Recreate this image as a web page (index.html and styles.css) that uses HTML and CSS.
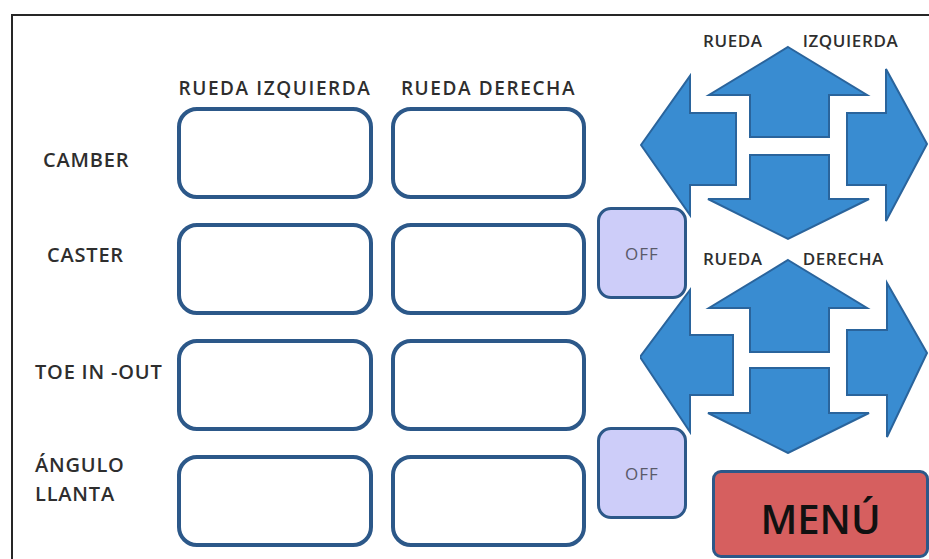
FILE: index.html
```html
<!DOCTYPE html>
<html>
  <head>
    <meta charset="utf-8">
    <link rel="stylesheet" href="styles.css">
  </head>
  <body>
    <div class="panel">
      <div class="table">
        <div class="col-head col-head--first">RUEDA IZQUIERDA</div>
        <div class="col-head">RUEDA DERECHA</div>

        <div class="label label--camber">CAMBER</div>
        <div class="field"></div>
        <div class="field"></div>

        <div class="label label--caster">CASTER</div>
        <div class="field"></div>
        <div class="field"></div>
        <div class="toggle toggle--top">OFF</div>

        <div class="label label--toe">TOE IN -OUT</div>
        <div class="field"></div>
        <div class="field"></div>

        <div class="label label--angle">ÁNGULO<br>LLANTA</div>
        <div class="field"></div>
        <div class="field"></div>
        <div class="toggle toggle--bottom">OFF</div>
      </div>

      <div class="side">
        <div class="wheel wheel--left">
          <div class="wheel-caption"><span>RUEDA</span><span>IZQUIERDA</span></div>
          <svg class="pad" width="289" height="196" viewBox="0 -2 289 196">
            <path d="M148 0 L227 48 L189 48 L189 90 L110 90 L110 48 L69 48 Z"/>
            <path d="M110 108 L189 108 L189 152 L229 152 L148 192 L68 152 L110 152 Z"/>
            <path d="M1 98 L50 29 L50 66 L96 66 L96 138 L50 138 L50 168 Z"/>
            <path d="M287 97 L246 22 L246 66 L207 66 L207 138 L246 138 L246 174 Z"/>
          </svg>
        </div>
        <div class="wheel wheel--right">
          <div class="wheel-caption"><span>RUEDA</span><span>DERECHA</span></div>
          <svg class="pad" width="289" height="196" viewBox="0 -2 289 196">
            <path d="M148 0 L227 48 L189 48 L189 92 L110 92 L110 48 L69 48 Z"/>
            <path d="M110 108 L189 108 L189 153 L229 153 L148 193 L68 153 L110 153 Z"/>
            <path d="M0 97 L50 30 L50 75 L93 75 L93 135 L50 135 L50 172 Z"/>
            <path d="M287 93 L247 23 L247 70 L207 70 L207 135 L247 135 L247 177 Z"/>
          </svg>
        </div>
        <div class="menu">MENÚ</div>
      </div>
    </div>
  </body>
</html>
```

FILE: styles.css
```css
body {
    margin: 0;
    overflow: hidden;
    background: #fff;
    font-family: "Open Sans", "Liberation Sans", sans-serif;
    color: #2e2e2e;
}

.panel {
    margin: 14px 0 0 11px;
    border-top: 2px solid #262626;
    border-left: 2px solid #262626;
    height: 543px;
    display: flex;
}

/* left part: labels, value boxes and toggles */
.table {
    display: grid;
    grid-template-columns: 146px 196px 195px 90px;
    grid-template-rows: 91px repeat(3, 116px) 92px;
    column-gap: 18px;
}

.col-head {
    align-self: end;
    padding-bottom: 6px;
    text-align: center;
    font-size: 19px;
    font-weight: 600;
    letter-spacing: 1.6px;
    white-space: nowrap;
}
.col-head--first { grid-column: 2; }

.label {
    grid-column: 1;
    align-self: start;
    font-size: 20px;
    font-weight: 600;
    line-height: 29px;
    letter-spacing: 0.8px;
    white-space: nowrap;
}
.label--camber { margin: 38px 0 0 30px; }
.label--caster { margin: 17px 0 0 34px; }
.label--toe { margin: 18px 0 0 22px; }
.label--angle { margin: -5px 0 0 22px; }

.field {
    align-self: start;
    height: 92px;
    box-sizing: border-box;
    border: 4px solid #2c5889;
    border-radius: 20px;
    background: #fff;
}

.toggle {
    grid-column: 4;
    align-self: start;
    width: 90px;
    height: 92px;
    margin-left: -7px;
    box-sizing: border-box;
    border: 3px solid #2c5889;
    border-radius: 14px;
    background: #cdcdf9;
    display: flex;
    align-items: center;
    justify-content: center;
    font-size: 17px;
    letter-spacing: 1px;
    color: #5a5a6a;
}
.toggle--top { grid-row: 3; margin-top: -16px; }
.toggle--bottom { grid-row: 5; margin-top: -28px; }

/* right part: direction pads and menu */
.side {
    flex: 1;
    margin-left: -54px;
    display: flex;
    flex-direction: column;
}

.wheel {
    display: flex;
    flex-direction: column;
}
.wheel--left { margin-top: 15px; }
.wheel--right { margin-top: 8px; }

.wheel-caption {
    display: flex;
    gap: 40px;
    padding-left: 63px;
    height: 20px;
    line-height: 20px;
    font-size: 17px;
    font-weight: 600;
    letter-spacing: 0.6px;
}

.pad { display: block; }
.wheel--left .pad { margin-top: -6px; }
.wheel--right .pad { margin-top: -11px; }
.pad path {
    fill: #398cd1;
    stroke: #2a649c;
    stroke-width: 2;
}

.menu {
    margin: 16px 0 0 72px;
    width: 217px;
    height: 88px;
    box-sizing: border-box;
    border: 3px solid #2c5889;
    border-radius: 9px;
    background: #d65f5f;
    display: flex;
    align-items: center;
    justify-content: center;
    padding-top: 8px;
    font-size: 40px;
    font-weight: 600;
    color: #111;
}
```
